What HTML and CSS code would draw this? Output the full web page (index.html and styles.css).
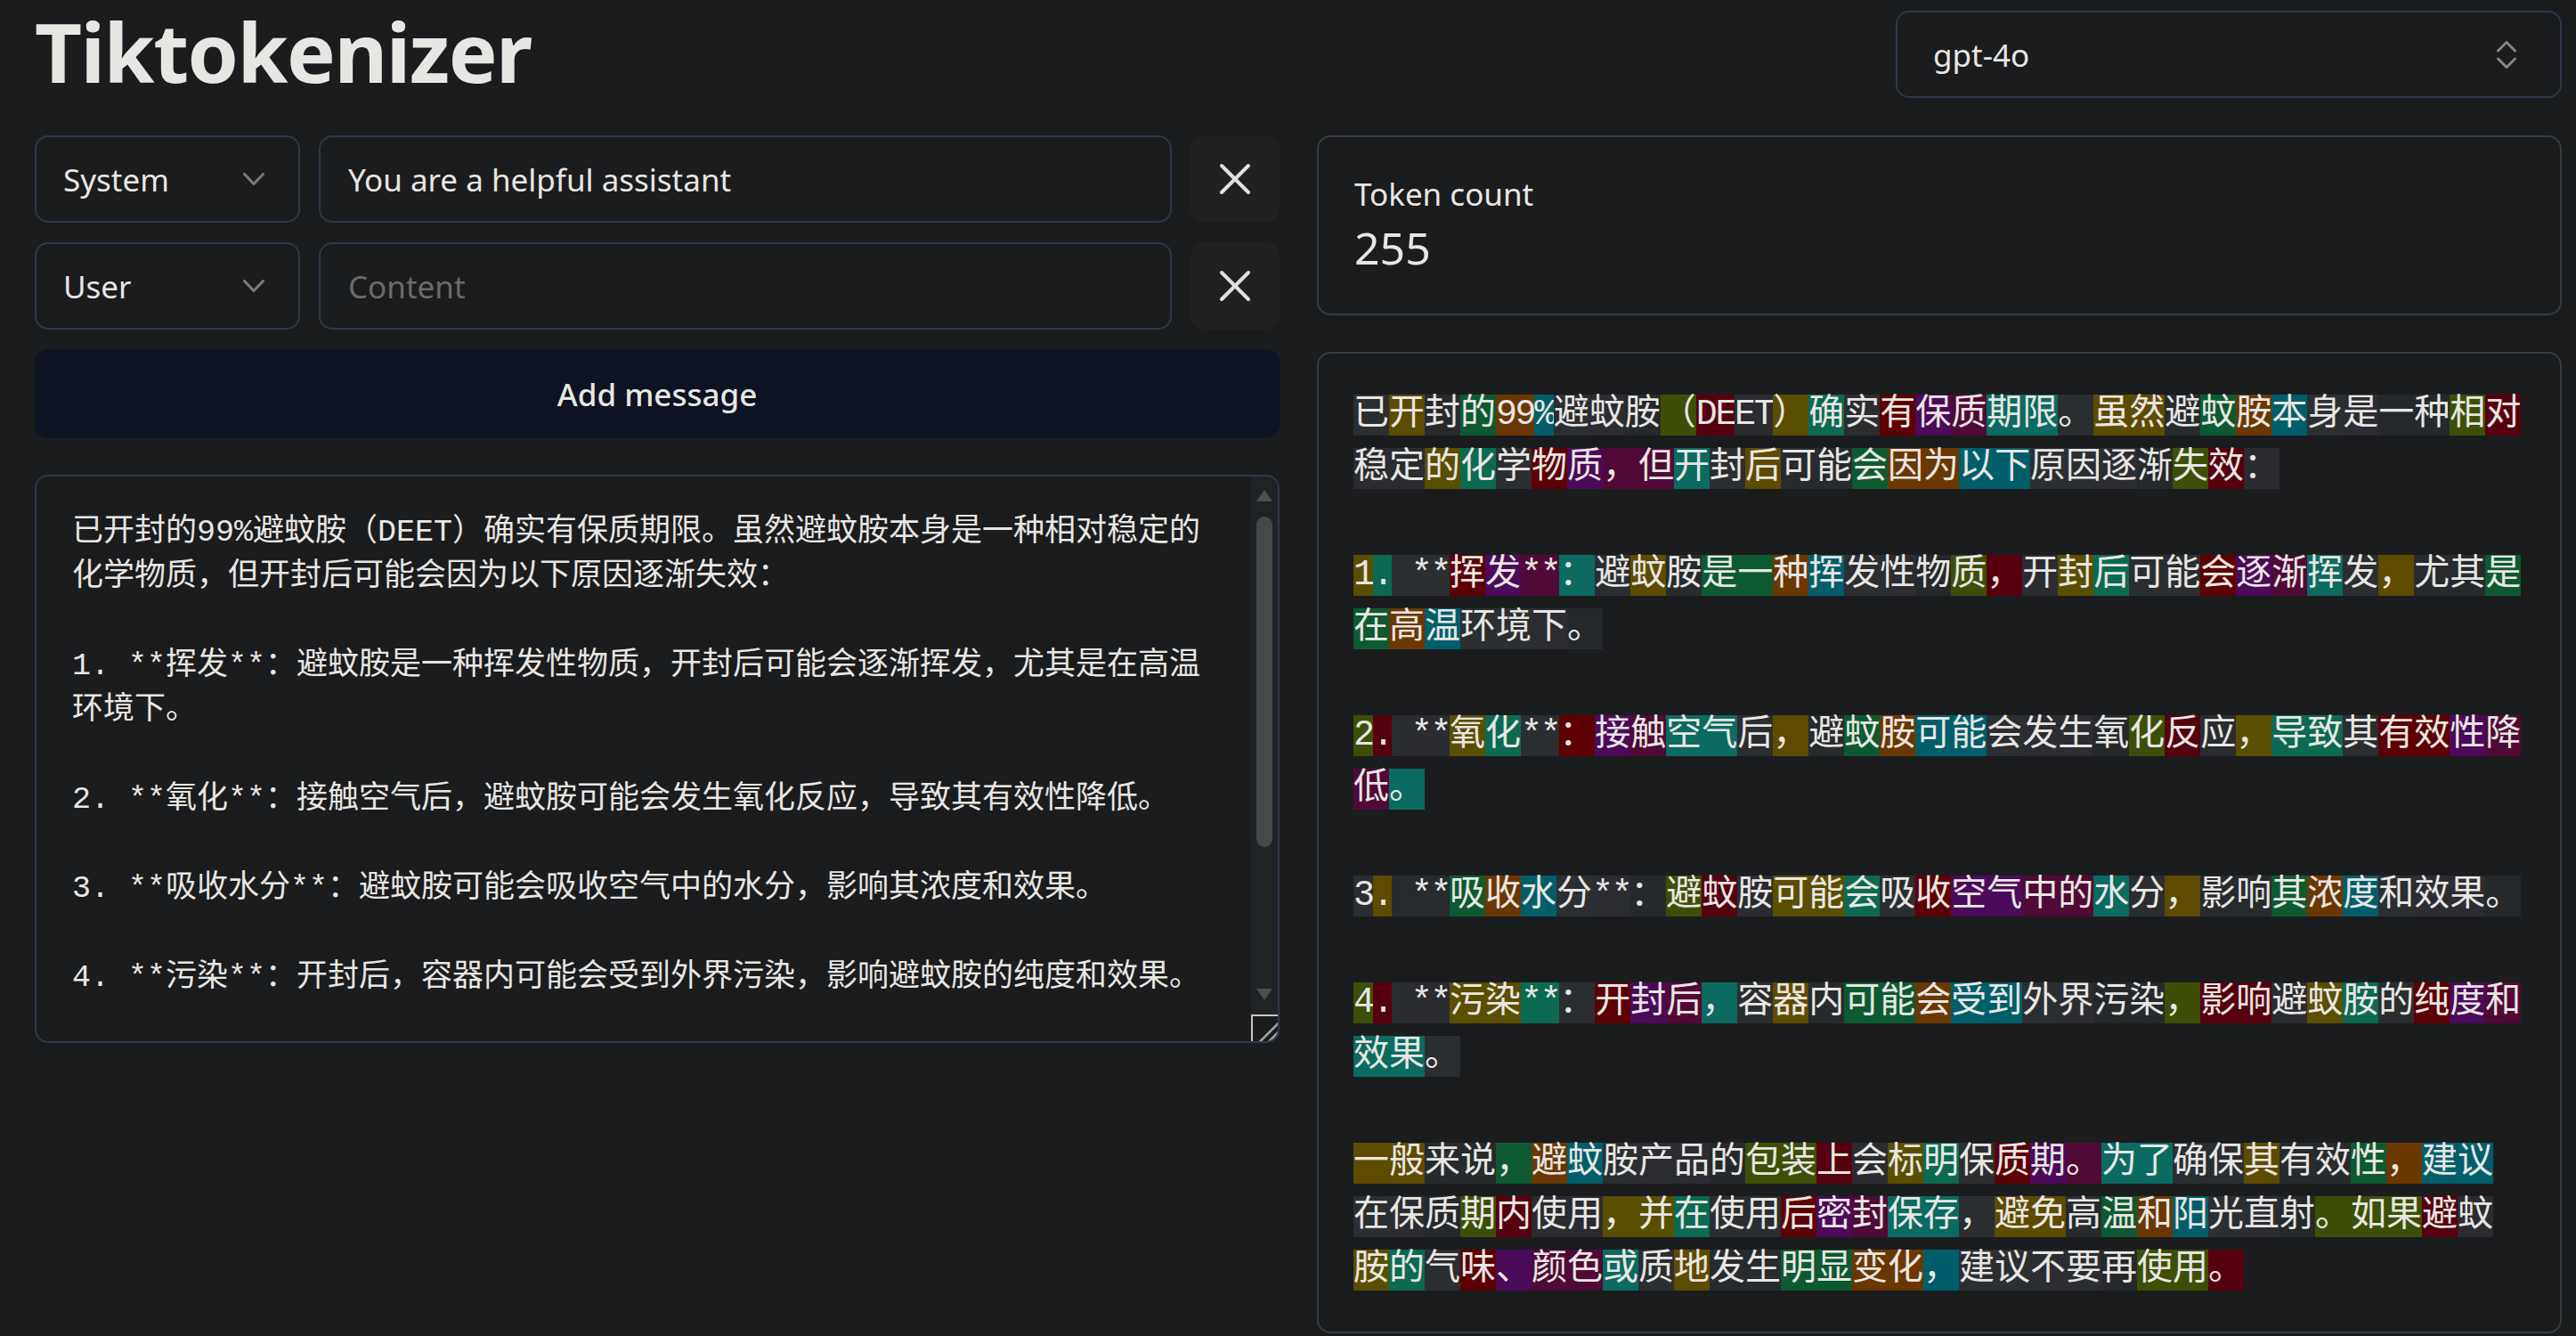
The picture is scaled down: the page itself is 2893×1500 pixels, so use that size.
FILE: index.html
```
<!DOCTYPE html>
<html lang="zh">
<head>
<meta charset="utf-8">
<title>Tiktokenizer</title>
<link rel="stylesheet" href="styles.css">
</head>
<body>
<main class="page">
  <header class="top">
    <h1 class="title">Tiktokenizer</h1>
    <button class="model" type="button">
      <span>gpt-4o</span>
      <svg class="updown" width="22" height="31" viewBox="0 0 22 31"><polyline points="1.5,11 11,1.5 20.5,11"/><polyline points="1.5,20 11,29.5 20.5,20"/></svg>
    </button>
  </header>
  <div class="cols">
    <section class="left">
      <div class="editor">
        <div class="row">
          <button class="role" type="button"><span>System</span><svg class="chev" width="24" height="15" viewBox="0 0 24 15"><polyline points="1.5,1.5 12,12.5 22.5,1.5"/></svg></button>
          <input class="content" type="text" value="You are a helpful assistant" placeholder="Content">
          <button class="remove" type="button" aria-label="Remove"><svg class="x" width="36" height="36" viewBox="0 0 36 36"><line x1="3" y1="3" x2="33" y2="33"/><line x1="33" y1="3" x2="3" y2="33"/></svg></button>
        </div>
        <div class="row">
          <button class="role" type="button"><span>User</span><svg class="chev" width="24" height="15" viewBox="0 0 24 15"><polyline points="1.5,1.5 12,12.5 22.5,1.5"/></svg></button>
          <input class="content" type="text" value="" placeholder="Content">
          <button class="remove" type="button" aria-label="Remove"><svg class="x" width="36" height="36" viewBox="0 0 36 36"><line x1="3" y1="3" x2="33" y2="33"/><line x1="33" y1="3" x2="3" y2="33"/></svg></button>
        </div>
        <button class="add" type="button">Add message</button>
      </div>
      <div class="raw-box">
        <textarea class="raw" spellcheck="false">已开封的99%避蚊胺（DEET）确实有保质期限。虽然避蚊胺本身是一种相对稳定的
化学物质，但开封后可能会因为以下原因逐渐失效：

1. **挥发**：避蚊胺是一种挥发性物质，开封后可能会逐渐挥发，尤其是在高温
环境下。

2. **氧化**：接触空气后，避蚊胺可能会发生氧化反应，导致其有效性降低。

3. **吸收水分**：避蚊胺可能会吸收空气中的水分，影响其浓度和效果。

4. **污染**：开封后，容器内可能会受到外界污染，影响避蚊胺的纯度和效果。

一般来说，避蚊胺产品的包装上会标明保质期。为了确保其有效性，建议在
保质期内使用，并在使用后密封保存，避免高温和阳光直射。如果避蚊胺的
气味、颜色或质地发生明显变化，建议不要再使用。</textarea>
        <div class="sb" aria-hidden="true">
          <div class="sb-up"><span class="tri-up"></span></div>
          <div class="sb-track"><div class="sb-thumb"></div></div>
          <div class="sb-down"><span class="tri-down"></span></div>
          <div class="sb-corner"></div>
        </div>
      </div>
    </section>
    <section class="right">
      <div class="count">
        <div class="count-label">Token count</div>
        <div class="count-value">255</div>
      </div>
      <div class="tokens">
        <div class="tl"><span class="c0">已</span><span class="c1">开</span><span class="c2">封</span><span class="c3">的</span><span class="c4 l">99</span><span class="c5 l">%</span><span class="c6">避</span><span class="c7">蚊</span><span class="c8">胺</span><span class="c9">（</span><span class="c10 l">DE</span><span class="c11 l">ET</span><span class="c12">）</span><span class="c13">确</span><span class="c14">实</span><span class="c15">有</span><span class="c16">保</span><span class="c17">质</span><span class="c18">期限</span><span class="c0">。</span><span class="c1">虽然</span><span class="c2">避</span><span class="c3">蚊</span><span class="c4">胺</span><span class="c5">本</span><span class="c6">身</span><span class="c7">是</span><span class="c8">一种</span><span class="c9">相</span><span class="c10">对</span></div>
        <div class="tl"><span class="c11">稳定</span><span class="c12">的</span><span class="c13">化</span><span class="c14">学</span><span class="c15">物</span><span class="c16">质</span><span class="c17">，但</span><span class="c18">开</span><span class="c0">封</span><span class="c1">后</span><span class="c2">可能</span><span class="c3">会</span><span class="c4">因为</span><span class="c5">以下</span><span class="c6">原因</span><span class="c7">逐</span><span class="c8">渐</span><span class="c9">失</span><span class="c10">效</span><span class="c11">：</span></div>
        <div class="tl"></div>
        <div class="tl"><span class="c12 l">1</span><span class="c13 l">.</span><span class="c14 l"> **</span><span class="c15">挥</span><span class="c16">发</span><span class="c17 l">**</span><span class="c18">：</span><span class="c0">避</span><span class="c1">蚊</span><span class="c2">胺</span><span class="c3">是一</span><span class="c4">种</span><span class="c5">挥</span><span class="c6">发</span><span class="c7">性</span><span class="c8">物</span><span class="c9">质</span><span class="c10">，</span><span class="c11">开</span><span class="c12">封</span><span class="c13">后</span><span class="c14">可能</span><span class="c15">会</span><span class="c16">逐</span><span class="c17">渐</span><span class="c18">挥</span><span class="c0">发</span><span class="c1">，</span><span class="c2">尤其</span><span class="c3">是</span></div>
        <div class="tl"><span class="c3">在</span><span class="c4">高</span><span class="c5">温</span><span class="c6">环境</span><span class="c7">下</span><span class="c8">。</span></div>
        <div class="tl"></div>
        <div class="tl"><span class="c9 l">2</span><span class="c10 l">.</span><span class="c11 l"> **</span><span class="c12">氧</span><span class="c13">化</span><span class="c14 l">**</span><span class="c15">：</span><span class="c16">接</span><span class="c17">触</span><span class="c18">空气</span><span class="c0">后</span><span class="c1">，</span><span class="c2">避</span><span class="c3">蚊</span><span class="c4">胺</span><span class="c5">可能</span><span class="c6">会</span><span class="c7">发生</span><span class="c8">氧</span><span class="c9">化</span><span class="c10">反</span><span class="c11">应</span><span class="c12">，</span><span class="c13">导致</span><span class="c14">其</span><span class="c15">有效</span><span class="c16">性</span><span class="c17">降</span></div>
        <div class="tl"><span class="c17">低</span><span class="c18">。</span></div>
        <div class="tl"></div>
        <div class="tl"><span class="c0 l">3</span><span class="c1 l">.</span><span class="c2 l"> **</span><span class="c3">吸</span><span class="c4">收</span><span class="c5">水</span><span class="c6">分</span><span class="c7 l">**</span><span class="c8">：</span><span class="c9">避</span><span class="c10">蚊</span><span class="c11">胺</span><span class="c12">可能</span><span class="c13">会</span><span class="c14">吸</span><span class="c15">收</span><span class="c16">空气</span><span class="c17">中的</span><span class="c18">水</span><span class="c0">分</span><span class="c1">，</span><span class="c2">影响</span><span class="c3">其</span><span class="c4">浓</span><span class="c5">度</span><span class="c6">和</span><span class="c7">效果</span><span class="c8">。</span></div>
        <div class="tl"></div>
        <div class="tl"><span class="c9 l">4</span><span class="c10 l">.</span><span class="c11 l"> **</span><span class="c12">污染</span><span class="c13 l">**</span><span class="c14">：</span><span class="c15">开</span><span class="c16">封</span><span class="c17">后</span><span class="c18">，</span><span class="c0">容</span><span class="c1">器</span><span class="c2">内</span><span class="c3">可能</span><span class="c4">会</span><span class="c5">受到</span><span class="c6">外</span><span class="c7">界</span><span class="c8">污染</span><span class="c9">，</span><span class="c10">影响</span><span class="c11">避</span><span class="c12">蚊</span><span class="c13">胺</span><span class="c14">的</span><span class="c15">纯</span><span class="c16">度</span><span class="c17">和</span></div>
        <div class="tl"><span class="c18">效果</span><span class="c0">。</span></div>
        <div class="tl"></div>
        <div class="tl"><span class="c1">一般</span><span class="c2">来说</span><span class="c3">，</span><span class="c4">避</span><span class="c5">蚊</span><span class="c6">胺</span><span class="c7">产品</span><span class="c8">的</span><span class="c9">包装</span><span class="c10">上</span><span class="c11">会</span><span class="c12">标</span><span class="c13">明</span><span class="c14">保</span><span class="c15">质</span><span class="c16">期</span><span class="c17">。</span><span class="c18">为了</span><span class="c0">确保</span><span class="c1">其</span><span class="c2">有效</span><span class="c3">性</span><span class="c4">，</span><span class="c5">建议</span></div>
        <div class="tl"><span class="c6">在</span><span class="c7">保</span><span class="c8">质</span><span class="c9">期</span><span class="c10">内</span><span class="c11">使用</span><span class="c12">，并</span><span class="c13">在</span><span class="c14">使用</span><span class="c15">后</span><span class="c16">密</span><span class="c17">封</span><span class="c18">保存</span><span class="c0">，</span><span class="c1">避免</span><span class="c2">高</span><span class="c3">温</span><span class="c4">和</span><span class="c5">阳</span><span class="c6">光</span><span class="c7">直</span><span class="c8">射</span><span class="c9">。如果</span><span class="c10">避</span><span class="c11">蚊</span></div>
        <div class="tl"><span class="c12">胺</span><span class="c13">的</span><span class="c14">气</span><span class="c15">味</span><span class="c16">、</span><span class="c17">颜色</span><span class="c18">或</span><span class="c0">质</span><span class="c1">地</span><span class="c2">发生</span><span class="c3">明显</span><span class="c4">变化</span><span class="c5">，</span><span class="c6">建议</span><span class="c7">不要</span><span class="c8">再</span><span class="c9">使用</span><span class="c10">。</span></div>
      </div>
    </section>
  </div>
</main>
</body>
</html>
```
FILE: styles.css
```
* { box-sizing: border-box; }
html, body { margin: 0; height: 100%; overflow: hidden; }
body {
  background: #1b1c1e;
  color: #e8e6e3;
  font-family: "Noto Sans", "Noto Sans CJK SC", sans-serif;
  color-scheme: dark;
}
button, input, textarea { font-family: inherit; color: inherit; }

.page {
  display: flex;
  flex-direction: column;
  gap: 42px;
  padding: 12px 16px 0 39px;
}

.top {
  display: flex;
  align-items: center;
  justify-content: space-between;
  height: 98px;
}
.title {
  margin: 0;
  font-size: 92px;
  line-height: 1;
  font-weight: 700;
  letter-spacing: -1.5px;
  color: #e8e6e3;
  transform: translateY(-3px);
}
.model {
  width: 748px;
  height: 98px;
  display: flex;
  align-items: center;
  justify-content: space-between;
  padding: 0 49px 0 40px;
  border: 2px solid #2c3a4d;
  border-radius: 15px;
  background: transparent;
  font-size: 35px;
}
.updown, .chev { fill: none; stroke: #878683; stroke-width: 3; stroke-linecap: round; stroke-linejoin: round; }
.chev { stroke: #7c7b78; }

.cols {
  display: grid;
  grid-template-columns: 1fr 1fr;
  column-gap: 42px;
}
.left, .right {
  display: flex;
  flex-direction: column;
  gap: 41px;
}
.editor {
  display: flex;
  flex-direction: column;
  gap: 22px;
}
.row {
  display: flex;
  gap: 21px;
  height: 98px;
}
.role {
  width: 298px;
  flex: none;
  display: flex;
  align-items: center;
  justify-content: space-between;
  padding: 0 38px 0 30px;
  border: 2px solid #2c3a4d;
  border-radius: 15px;
  background: transparent;
  font-size: 35px;
}
.content {
  flex: 1;
  min-width: 0;
  padding: 0 31px;
  border: 2px solid #2c3a4d;
  border-radius: 15px;
  background: transparent;
  font-size: 35px;
  outline: none;
}
.content::placeholder { color: #6b6a66; }
.remove {
  width: 100px;
  flex: none;
  display: flex;
  align-items: center;
  justify-content: center;
  border: 0;
  border-radius: 15px;
  background: #1f2123;
}
.x { fill: none; stroke: #e2e0dc; stroke-width: 4; stroke-linecap: round; }
.add {
  height: 100px;
  border: 0;
  border-radius: 15px;
  background: #0d1322;
  font-size: 35px;
  font-weight: 500;
}

.raw-box {
  display: flex;
  height: 638px;
  border: 2px solid #2c3a4d;
  border-radius: 15px;
  overflow: hidden;
}
.raw {
  flex: 1;
  min-width: 0;
  padding: 38px 40px;
  border: 0;
  background: transparent;
  font-family: "Liberation Mono", "Noto Sans CJK SC", monospace;
  font-size: 35px;
  line-height: 50px;
  white-space: pre;
  overflow: hidden;
  resize: none;
  outline: none;
}
.sb {
  width: 30px;
  flex: none;
  display: flex;
  flex-direction: column;
  background: #202325;
}
.sb-up {
  height: 40px;
  display: flex;
  justify-content: center;
  padding-top: 15px;
}
.tri-up {
  width: 0;
  height: 0;
  border-left: 9px solid transparent;
  border-right: 9px solid transparent;
  border-bottom: 13px solid #4b4f52;
}
.sb-track {
  flex: 1;
  padding: 5px 6px 0;
}
.sb-thumb {
  height: 371px;
  border-radius: 9px;
  background: #45494c;
}
.sb-down {
  height: 44px;
  display: flex;
  justify-content: center;
  padding-top: 15px;
}
.tri-down {
  width: 0;
  height: 0;
  border-left: 9px solid transparent;
  border-right: 9px solid transparent;
  border-top: 13px solid #4b4f52;
}
.sb-corner {
  height: 30px;
  border-top: 2px solid #c9c7c3;
  border-left: 2px solid #c9c7c3;
  background:
    linear-gradient(135deg, transparent 62%, #9a9894 62%, #9a9894 68%, transparent 68%, transparent 80%, #9a9894 80%, #9a9894 86%, transparent 86%),
    #1b1c1e;
}

.count {
  height: 202px;
  padding: 39px 40px;
  border: 2px solid #383d3f;
  border-radius: 15px;
}
.count-label { font-size: 35px; line-height: 50px; }
.count-value { font-size: 50px; line-height: 70px; }

.tokens {
  padding: 39px 39px;
  border: 2px solid #383d3f;
  border-radius: 15px;
  font-family: "Liberation Mono", "Noto Sans CJK SC", monospace;
  font-size: 40px;
  color: #e8e6e3;
}
.tl {
  display: flex;
  align-items: center;
  height: 60px;
}
.tl span {
  height: 46px;
  line-height: 46px;
  white-space: pre;
}
.tl .l { letter-spacing: -2.4px; }

.c0 { background: #2a2e31; }
.c1 { background: #5d4b00; }
.c2 { background: #272b2e; }
.c3 { background: #0d5a32; }
.c4 { background: #6b3700; }
.c5 { background: #005e6b; }
.c6 { background: #2b2f32; }
.c7 { background: #2c2d33; }
.c8 { background: #25292c; }
.c9 { background: #3d4f06; }
.c10 { background: #56000f; }
.c11 { background: #2a2c31; }
.c12 { background: #5a4e00; }
.c13 { background: #0c6a53; }
.c14 { background: #2b2e31; }
.c15 { background: #5c0003; }
.c16 { background: #4b0a5a; }
.c17 { background: #500a35; }
.c18 { background: #0b6b60; }
```
